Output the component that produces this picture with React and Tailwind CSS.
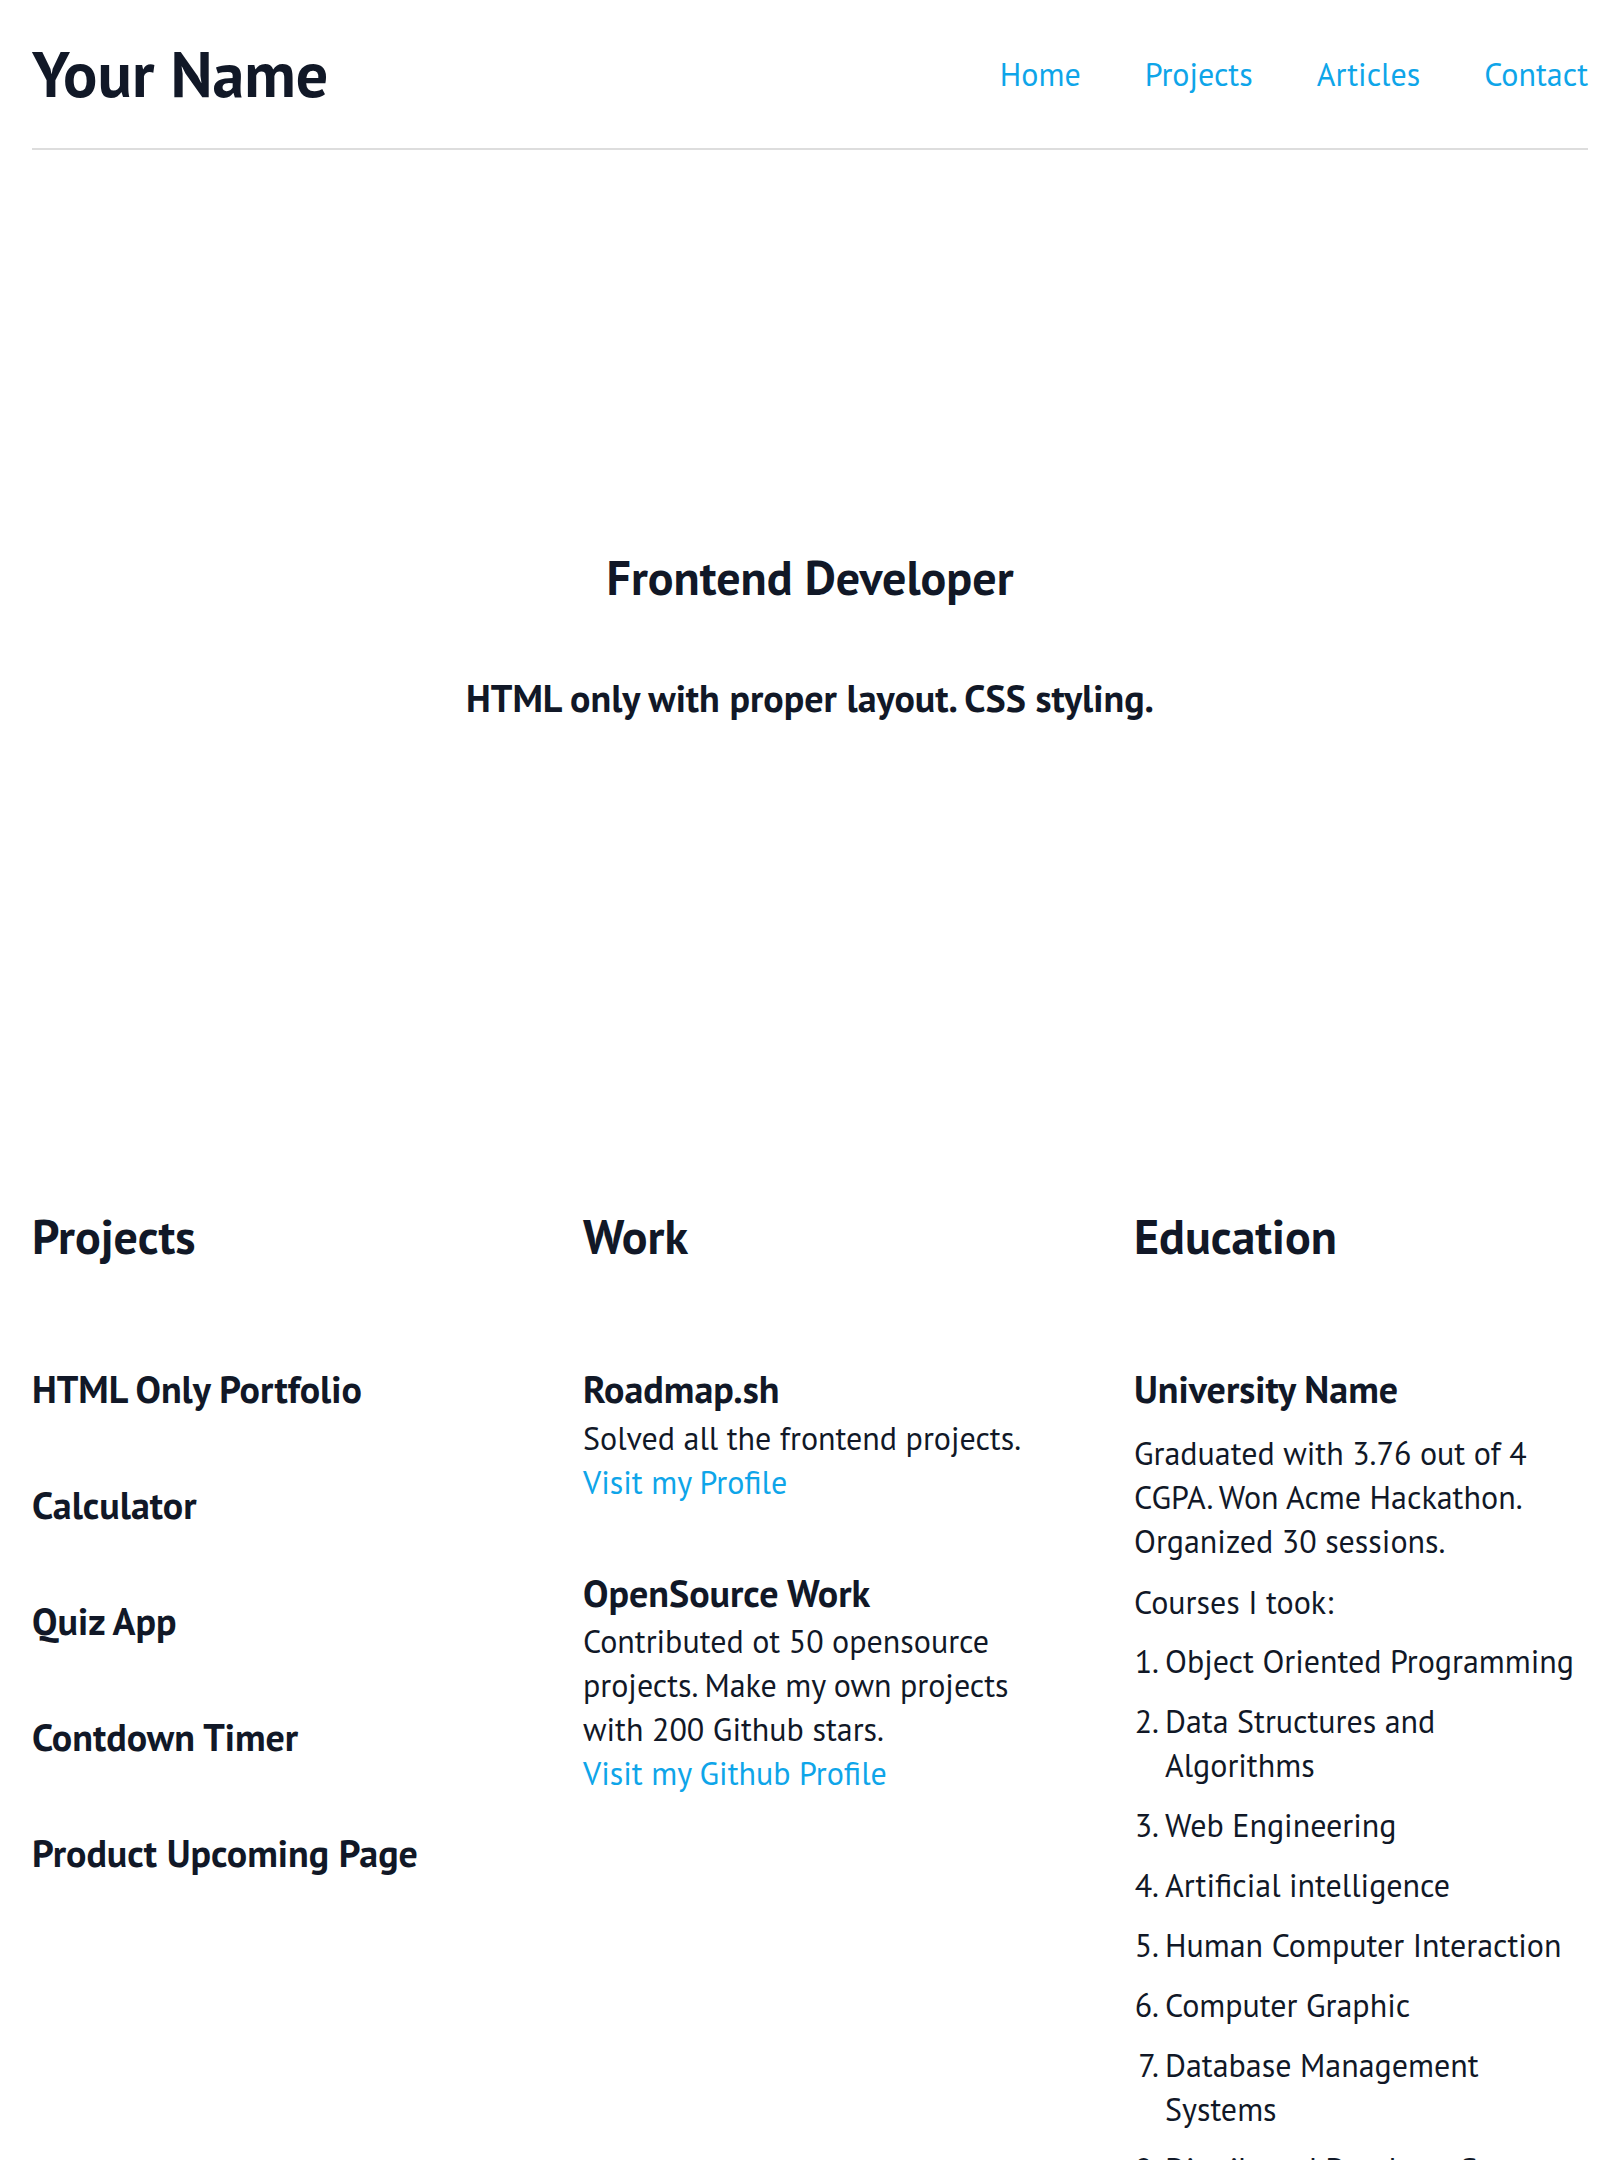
import React from 'react';

const projects = ['HTML Only Portfolio', 'Calculator', 'Quiz App', 'Contdown Timer', 'Product Upcoming Page'];

const courses = [
  'Object Oriented Programming',
  'Data Structures and Algorithms',
  'Web Engineering',
  'Artificial intelligence',
  'Human Computer Interaction',
  'Computer Graphic',
  'Database Management Systems',
  'Distributed Database Systems',
];

const App = () => {
  return (
    <div className="min-h-screen bg-white px-8 text-[#111827] font-['PT_Sans','Lato',sans-serif]">
      <header className="flex h-[150px] items-center justify-between border-b-2 border-[#dddddd]">
        <h1 className="text-[64px] font-bold leading-none">Your Name</h1>
        <nav className="flex gap-[64px] text-[32px] text-[#0ea5e9]">
          <a href="#">Home</a>
          <a href="#">Projects</a>
          <a href="#">Articles</a>
          <a href="#">Contact</a>
        </nav>
      </header>

      <section className="flex h-[969px] flex-col items-center justify-center gap-[78px] text-center">
        <h2 className="text-[48px] font-bold leading-none">Frontend Developer</h2>
        <p className="text-[38px] font-bold leading-none">HTML only with proper layout. CSS styling.</p>
      </section>

      <div className="grid grid-cols-3 gap-x-[97px] pt-[89px]">
        <div>
          <h2 className="text-[48px] font-bold leading-[56px]">Projects</h2>
          <ul className="mt-[105px] flex flex-col gap-[76px]">
            {projects.map((p) => (
              <li key={p} className="text-[38px] font-bold leading-[40px]">{p}</li>
            ))}
          </ul>
        </div>

        <div>
          <h2 className="text-[48px] font-bold leading-[56px]">Work</h2>
          <div className="mt-[105px]">
            <h3 className="text-[38px] font-bold leading-[40px]">Roadmap.sh</h3>
            <p className="mt-[7px] text-[32px] leading-[44px]">Solved all the frontend projects.</p>
            <a href="#" className="block text-[32px] leading-[44px] text-[#0ea5e9]">Visit my Profile</a>
          </div>
          <div className="mt-[69px]">
            <h3 className="text-[38px] font-bold leading-[40px]">OpenSource Work</h3>
            <p className="mt-[6px] text-[32px] leading-[44px]">
              Contributed ot 50 opensource projects. Make my own projects with 200 Github stars.
            </p>
            <a href="#" className="block text-[32px] leading-[44px] text-[#0ea5e9]">Visit my Github Profile</a>
          </div>
        </div>

        <div>
          <h2 className="text-[48px] font-bold leading-[56px]">Education</h2>
          <div className="mt-[105px]">
            <h3 className="text-[38px] font-bold leading-[40px]">University Name</h3>
            <p className="mt-[22px] text-[32px] leading-[44px]">
              Graduated with 3.76 out of 4 CGPA. Won Acme Hackathon. Organized 30 sessions.
            </p>
            <p className="mt-[17px] text-[32px] leading-[44px]">Courses I took:</p>
            <ol className="mt-[15px] flex list-decimal flex-col gap-[16px] pl-[31px] text-[32px] leading-[44px]">
              {courses.map((c) => (
                <li key={c}>{c}</li>
              ))}
            </ol>
          </div>
        </div>
      </div>
    </div>
  );
};

export default App;
